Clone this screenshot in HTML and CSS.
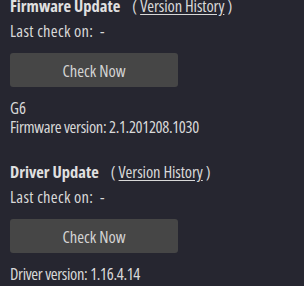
FILE: index.html
```html
<!DOCTYPE html>
<html>
<head>
<meta charset="utf-8">
<link rel="stylesheet" href="styles.css">
</head>
<body>
<div class="panel">
  <section class="section">
    <div class="title-row">
      <span class="title">Firmware Update</span>
      <span class="history">( <a class="link" href="#">Version History</a> )</span>
    </div>
    <div class="line last">Last check on:&nbsp; -</div>
    <button class="btn">Check Now</button>
    <div class="info">
      <div class="line">G6</div>
      <div class="line num">Firmware version: 2.1.201208.1030</div>
    </div>
  </section>
  <section class="section">
    <div class="title-row">
      <span class="title">Driver Update</span>
      <span class="history">( <a class="link" href="#">Version History</a> )</span>
    </div>
    <div class="line last">Last check on:&nbsp; -</div>
    <button class="btn">Check Now</button>
    <div class="info">
      <div class="line num">Driver version: 1.16.4.14</div>
    </div>
  </section>
</div>
</body>
</html>
```
FILE: styles.css
```css
html, body {
  margin: 0;
  padding: 0;
  background: #262630;
  overflow: hidden;
}
body {
  font-family: "Open Sans", "Roboto", sans-serif;
  font-stretch: 75%;
  font-size: 16.5px;
  color: #d8d8d8;
}
.panel {
  padding: 0 0 0 10px;
  margin-top: -4px;
  display: flex;
  flex-direction: column;
  gap: 26px;
}
.section {
  display: flex;
  flex-direction: column;
}
.title-row {
  display: flex;
  align-items: baseline;
  gap: 12px;
  line-height: 20px;
  white-space: nowrap;
}
.title {
  font-weight: 700;
  font-stretch: 80%;
  color: #e0e0e0;
}
.history {
  color: #d8d8d8;
}
.link {
  color: #d8d8d8;
  text-decoration: underline;
  text-underline-offset: 2px;
  letter-spacing: -0.1px;
}
.line {
  line-height: 19px;
  white-space: nowrap;
}
.num {
  letter-spacing: -0.35px;
}
.last {
  margin-top: 5px;
  line-height: 20px;
  letter-spacing: 0.3px;
}
.btn {
  margin-top: 12px;
  width: 168px;
  height: 34px;
  border: none;
  border-radius: 3px;
  background: #464646;
  color: #d4d4d4;
  font-family: inherit;
  font-stretch: 75%;
  font-size: 16.5px;
  font-weight: 500;
  padding: 0;
}
.info {
  margin-top: 11px;
  display: flex;
  flex-direction: column;
}
```
